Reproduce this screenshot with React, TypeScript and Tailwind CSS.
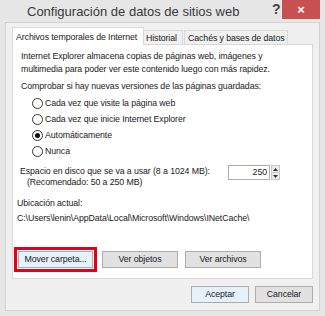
import React from "react";

const Radio = ({ checked, label }: { checked?: boolean; label: string }) => (
  <div className="flex items-center h-[16px] pl-[19px]">
    <span className="w-[11px] h-[11px] rounded-full border border-[#333] bg-white flex items-center justify-center">
      {checked && <span className="w-[5px] h-[5px] rounded-full bg-[#111]" />}
    </span>
    <span className="ml-[2px]">{label}</span>
  </div>
);

const Btn = ({ children, className = "" }: { children: React.ReactNode; className?: string }) => (
  <div
    className={
      "h-[17px] flex items-center justify-center border border-[#adadad] bg-[#e1e1e1] " + className
    }
  >
    {children}
  </div>
);

export default function App() {
  return (
    <div
      className="w-[325px] h-[316px] bg-[#e6e6e6] overflow-hidden text-[#1a1a1a] flex flex-col"
      style={{ fontFamily: '"Liberation Sans", Arial, sans-serif' }}
    >
      {/* title bar */}
      <div className="h-[22px] flex items-start relative shrink-0">
        <div className="ml-[27px] mt-[3px] text-[13px] leading-[17px] text-[#3a3a3a] whitespace-nowrap">
          Configuración de datos de sitios web
        </div>
        <div className="absolute left-[272px] top-[1px] text-[14px] font-bold text-[#444] leading-[16px]">?</div>
        <div className="absolute left-[282px] top-0 w-[38px] h-[19px] bg-[#c75050] flex items-center justify-center text-white text-[13px] font-bold leading-none">
          ×
        </div>
      </div>

      {/* client area */}
      <div className="ml-[5px] mr-[5px] h-[289px] border border-[#d2d2d2] bg-[#f0f0f0] flex flex-col px-[6px] text-[8.8px] tracking-[-0.1px]">
        {/* tabs */}
        <div className="flex items-end h-[18px] mt-[4px] relative z-10 whitespace-nowrap">
          <div className="h-[18px] w-[132px] bg-white border border-[#d9d9d9] border-b-0 pl-[3px] pt-[3px] leading-[12px]">
            Archivos temporales de Internet
          </div>
          <div className="h-[14px] w-[39px] bg-[#f0f0f0] border border-[#d9d9d9] border-b-0 border-l-0 pl-[2px] pt-[1px] leading-[12px] mb-px">
            Historial
          </div>
          <div className="h-[14px] w-[104px] ml-[1px] bg-[#f0f0f0] border border-[#d9d9d9] border-b-0 pl-[3px] pt-[1px] leading-[12px] mb-px">
            Cachés y bases de datos
          </div>
        </div>
        <div className="h-[235px] -mt-[1px] bg-white border border-[#d9d9d9] flex flex-col pt-[5px] leading-[13px]">
          <div className="pl-[8px]">
            Internet Explorer almacena copias de páginas web, imágenes y
            <br />
            multimedia para poder ver este contenido luego con más rapidez.
          </div>
          <div className="pl-[8px] mt-[4px]">Comprobar si hay nuevas versiones de las páginas guardadas:</div>
          <div className="mt-[2px] flex flex-col">
            <Radio label="Cada vez que visite la página web" />
            <Radio label="Cada vez que inicie Internet Explorer" />
            <Radio checked label="Automáticamente" />
            <Radio label="Nunca" />
          </div>
          <div className="flex mt-[5px] leading-[11px]">
            <div className="pl-[7px] pt-[2px] w-[215px]">
              Espacio en disco que se va a usar (8 a 1024 MB):
              <br />
              <span className="pl-[7px]">(Recomendado: 50 a 250 MB)</span>
            </div>
            <div className="flex items-stretch h-[15px] mt-[1px]">
              <div className="w-[42px] border border-[#abadb3] bg-white text-right pr-[2px] leading-[13px]">250</div>
              <div className="w-[9px] ml-[1px] flex flex-col border border-[#c8c8c8] bg-[#ececec]">
                <div className="flex-1 flex items-center justify-center">
                  <svg width="5" height="3" viewBox="0 0 5 3"><path d="M0 3 L2.5 0 L5 3 Z" fill="#333" /></svg>
                </div>
                <div className="h-px bg-[#c8c8c8]" />
                <div className="flex-1 flex items-center justify-center">
                  <svg width="5" height="3" viewBox="0 0 5 3"><path d="M0 0 L2.5 3 L5 0 Z" fill="#333" /></svg>
                </div>
              </div>
            </div>
          </div>
          <div className="pl-[4px] mt-[9px]">Ubicación actual:</div>
          <div className="pl-[4px] mt-[2px] whitespace-nowrap">C:\Users\lenin\AppData\Local\Microsoft\Windows\INetCache\</div>
          <div className="flex items-center mt-[22px] pl-[1px]">
            <div className="border-[3px] border-[#e3001b] p-[1px]">
              <Btn className="w-[75px] bg-[#e5f1fb] border-[#7eb4ea]">Mover carpeta...</Btn>
            </div>
            <Btn className="w-[76px] ml-[5px]">Ver objetos</Btn>
            <Btn className="w-[76px] ml-[7px]">Ver archivos</Btn>
          </div>
        </div>
        <div className="flex justify-end mt-[7px]">
          <Btn className="w-[58px] h-[17px] border-[#3c7fb1] bg-[#e5f1fb]">Aceptar</Btn>
          <Btn className="w-[58px] h-[17px] ml-[6px]">Cancelar</Btn>
        </div>
      </div>
    </div>
  );
}
